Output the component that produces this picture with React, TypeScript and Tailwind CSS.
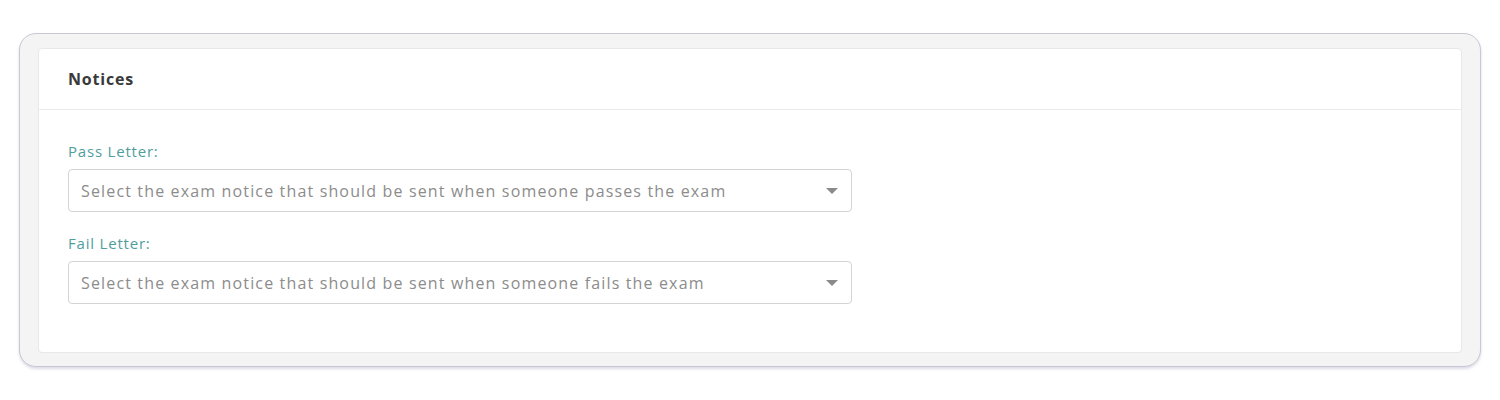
type NoticeFieldProps = {
  label: string;
  placeholder: string;
};

function NoticeField({ label, placeholder }: NoticeFieldProps) {
  return (
    <div>
      <label className="mb-2 block text-[15px] leading-5 tracking-[0.8px] text-[#4f9e9b]">{label}</label>
      <div className="flex h-[43px] w-[784px] items-center justify-between rounded-[4px] border border-[#d4d4d4] bg-white pl-3 pr-[13px]">
        <span className="text-[16px] leading-5 tracking-[1.15px] text-[#8c8c8c]">{placeholder}</span>
        <svg width="12" height="6" viewBox="0 0 12 6" className="text-[#8a8a8a]">
          <path d="M0 0h12L6 6z" fill="currentColor" />
        </svg>
      </div>
    </div>
  );
}

export default function App() {
  return (
    <div
      className="min-h-[400px] bg-white px-[19px] pt-[33px]"
      style={{ fontFamily: '"Open Sans", "Liberation Sans", sans-serif' }}
    >
      <div className="rounded-[17px] border border-[#c9c7d6] bg-[#f4f4f4] px-[18px] pb-[13px] pt-[14px] shadow-[0_2px_3px_rgba(120,115,160,0.25)]">
        <div className="rounded-[4px] border border-[#e8e8e8] bg-white">
          <div className="flex h-[61px] items-center border-b border-[#ececec] px-[29px]">
            <h3 className="text-[16px] font-bold tracking-[0.8px] text-[#3a3a3a]">Notices</h3>
          </div>
          <div className="flex flex-col gap-[21px] px-[29px] pb-[48px] pt-[31px]">
            <NoticeField
              label="Pass Letter:"
              placeholder="Select the exam notice that should be sent when someone passes the exam"
            />
            <NoticeField
              label="Fail Letter:"
              placeholder="Select the exam notice that should be sent when someone fails the exam"
            />
          </div>
        </div>
      </div>
    </div>
  );
}
